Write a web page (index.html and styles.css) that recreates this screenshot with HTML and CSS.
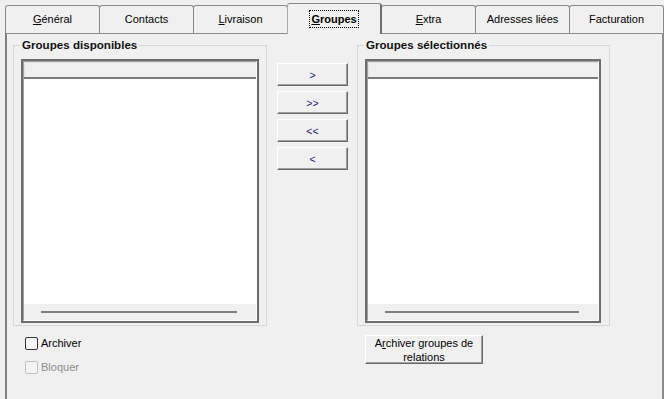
FILE: index.html
```html
<!DOCTYPE html>
<html lang="fr">
<head>
  <meta charset="UTF-8" />
  <meta name="viewport" content="width=device-width, initial-scale=1.0"/>
  <title>Groupes</title>
  <link rel="stylesheet" href="styles.css">
</head>
<body>
  <div class="tabs">
    <div class="tab"><u>G</u>énéral</div>
    <div class="tab">Contacts</div>
    <div class="tab"><u>L</u>ivraison</div>
    <div class="tab active"><span class="focus"><u>G</u>roupes</span></div>
    <div class="tab"><u>E</u>xtra</div>
    <div class="tab">Adresses liées</div>
    <div class="tab">Facturation</div>
  </div>
  <div class="panel">
    <div class="col">
      <fieldset class="group">
        <legend>Groupes disponibles</legend>
        <div class="listbox">
          <div class="list-inner">
            <div class="list-head"></div>
            <div class="list-body"></div>
            <div class="list-foot"><div class="hscroll"></div></div>
          </div>
        </div>
      </fieldset>
      <label class="check"><input type="checkbox">Archiver</label>
      <label class="check disabled"><input type="checkbox" disabled>Bloquer</label>
    </div>
    <div class="moves">
      <button class="move">&gt;</button>
      <button class="move">&gt;&gt;</button>
      <button class="move">&lt;&lt;</button>
      <button class="move">&lt;</button>
    </div>
    <div class="col">
      <fieldset class="group right">
        <legend>Groupes sélectionnés</legend>
        <div class="listbox">
          <div class="list-inner">
            <div class="list-head"></div>
            <div class="list-body"></div>
            <div class="list-foot"><div class="hscroll"></div></div>
          </div>
        </div>
      </fieldset>
      <button class="archive">A<u>r</u>chiver groupes de relations</button>
    </div>
  </div>
</body>
</html>
```

FILE: styles.css
```css
html, body {
  margin: 0;
  height: 399px;
  overflow: hidden;
}
body {
  font-family: "Liberation Sans", Arial, sans-serif;
  font-size: 11px;
  color: #000;
  background: #f0f0f0;
}
.tabs {
  display: flex;
  align-items: flex-end;
  padding: 3px 0 0 5px;
  height: 30px;
}
.tab {
  position: relative;
  width: 95px;
  height: 28px;
  margin-right: -1px;
  box-sizing: border-box;
  border: 1px solid #8b8b8b;
  border-bottom: none;
  border-radius: 3px 3px 0 0;
  background: #f0f0f0;
  display: flex;
  align-items: center;
  justify-content: center;
  padding-bottom: 1px;
  flex-shrink: 0;
}
.tab.active {
  z-index: 1;
  height: 31px;
  margin-bottom: -1px;
  padding-bottom: 0;
  border-left-color: #a8a8a8;
  border-right: 2px solid #6e6e6e;
  font-weight: bold;
}
.focus {
  outline: 1px dotted #000;
  padding: 1px 1px;
  line-height: 14px;
}
.panel {
  display: flex;
  align-items: flex-start;
  margin-left: 5px;
  height: 366px;
  box-sizing: border-box;
  border-top: 1px solid #8b8b8b;
  border-left: 2px solid #808080;
  border-right: 2px solid #8b8b8b;
  padding: 4px 0 0 6px;
}
.col {
  display: flex;
  flex-direction: column;
  align-items: flex-start;
}
.group {
  width: 254px;
  box-sizing: border-box;
  margin: 0;
  padding: 0;
  min-width: 0;
  border: 1px solid #d7d7d7;
}
.group.right {
  width: 253px;
}
.group legend {
  margin-left: 6px;
  padding: 0 2px;
  font-size: 11.6px;
  font-weight: bold;
  line-height: 14px;
  color: #111;
}
.listbox {
  width: 238px;
  height: 264px;
  margin: 7px 0 2px 7px;
  box-sizing: border-box;
  border: 2px solid #6d6d6d;
}
.group.right .listbox {
  width: 236px;
}
.list-inner {
  height: 100%;
  box-sizing: border-box;
  border: 1px solid;
  border-color: #a0a0a0 #fff #fff #a0a0a0;
  display: flex;
  flex-direction: column;
}
.list-head {
  height: 15px;
  flex-shrink: 0;
  background: #f0f0f0;
  border-bottom: 2px solid #7a7a7a;
  box-shadow: inset 1px 1px #e2e2e2;
}
.list-body {
  flex: 1;
  background: #fff;
}
.list-foot {
  height: 16px;
  flex-shrink: 0;
  background: #f0f0f0;
  padding: 7px 19px 0 17px;
  box-sizing: border-box;
}
.hscroll {
  height: 2px;
  background: #808080;
}
.check {
  display: flex;
  align-items: center;
  height: 14px;
  margin: 10px 0 0 12px;
  line-height: 14px;
}
.check + .check {
  margin-top: 10px;
}
.check input {
  appearance: none;
  width: 13px;
  height: 13px;
  margin: 0 3px 0 0;
  box-sizing: border-box;
  border: 1px solid #333;
  border-radius: 2px;
  background: #f6f6f6;
}
.check.disabled {
  color: #8d8d8d;
}
.check.disabled input {
  border-color: #c2c2c2;
  background: #f4f4f4;
}
button {
  font-family: "Liberation Sans", Arial, sans-serif;
  font-size: 11px;
  background: #f0f0f0;
  border: 1px solid;
  border-color: #fff #696969 #696969 #fff;
  box-shadow: inset -1px -1px #a0a0a0;
  padding: 0;
  box-sizing: border-box;
  border-radius: 0;
}
.moves {
  display: flex;
  flex-direction: column;
  gap: 5px;
  margin: 25px 0 0 10px;
}
.move {
  width: 71px;
  height: 23px;
  color: #1c1c6e;
  font-size: 10.5px;
}
.moves + .col {
  margin-left: 9px;
}
.archive {
  width: 118px;
  height: 29px;
  margin: 9px 0 0 8px;
  line-height: 14px;
  color: #000;
  text-align: center;
}
```
